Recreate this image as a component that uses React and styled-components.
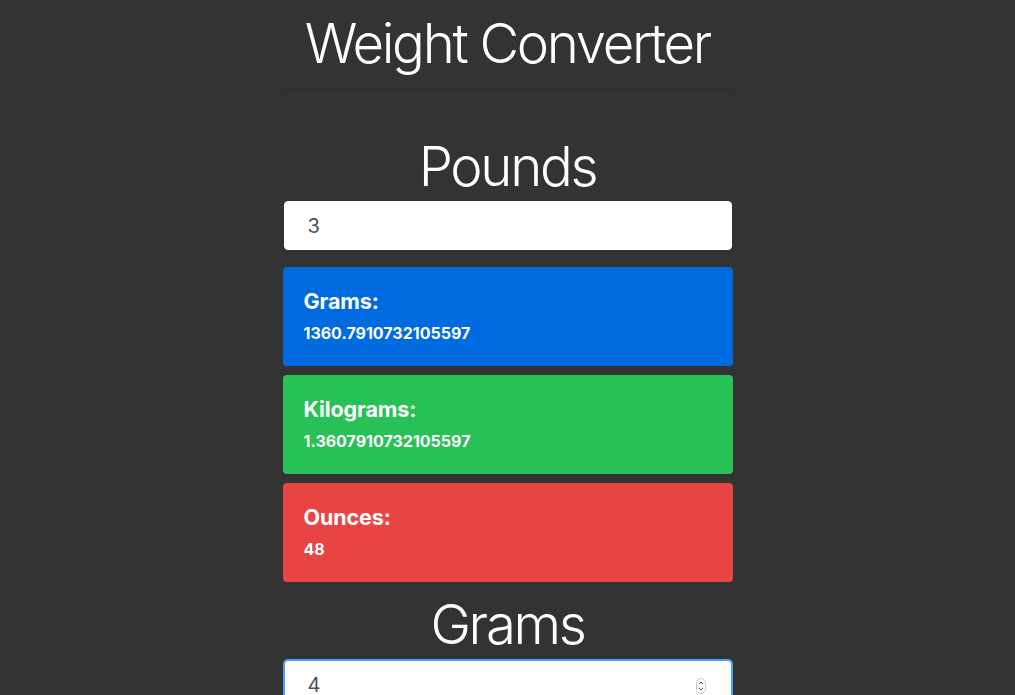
import React, { useState, useEffect, useRef } from 'react';
import styled, { createGlobalStyle } from "styled-components";

const GlobalStyle = createGlobalStyle`
    body {
        margin: 0;
        background: #333333;
        font-family: "Inter", "Liberation Sans", sans-serif;
        color: #ffffff;
    }
`;

const Page = styled.div`
    width: 450px;
    margin: 0 auto;
    padding-top: 10px;
`;

const Title = styled.h1`
    font-size: 54.5px;
    font-weight: 300;
    line-height: 67px;
    text-align: center;
    margin: 0;
    letter-spacing: -2.3px;
`;

const Rule = styled.hr`
    border: 0;
    border-top: 1px solid rgba(0, 0, 0, 0.12);
    margin: 12px 0 0;
`;

const Section = styled.h2`
    font-size: 54.5px;
    font-weight: 300;
    line-height: 67px;
    text-align: center;
    margin: ${props => props.$top}px 0 ${props => props.$bottom}px;
    letter-spacing: -2.3px;
`;

const FieldWrap = styled.div`
    position: relative;
`;

const Field = styled.input`
    box-sizing: border-box;
    display: block;
    width: calc(100% - 2px);
    height: 49px;
    margin: 0 auto;
    padding: 0 23px;
    font-family: "Inter", "Liberation Sans", sans-serif;
    font-size: 20px;
    color: #495057;
    background: #fff;
    border: 1px solid #fff;
    border-radius: 4px;
    outline: none;
    -moz-appearance: textfield;

    &:focus {
        border-color: #4aa3f5;
        box-shadow: 0 0 0 1px #4aa3f5;
    }

    &::-webkit-inner-spin-button,
    &::-webkit-outer-spin-button {
        -webkit-appearance: none;
        margin: 0;
    }
`;

const Spinner = styled.svg`
    position: absolute;
    right: 27px;
    top: 18px;
    pointer-events: none;
`;

const Card = styled.div`
    box-sizing: border-box;
    height: 99px;
    margin-top: ${props => props.$first ? 17 : 9}px;
    padding: 22px 21px;
    background: ${props => props.$color};
    border-radius: 4px;
`;

const CardTitle = styled.h5`
    margin: 0 0 10px;
    font-size: 21.5px;
    font-weight: 700;
    line-height: 24px;
    letter-spacing: -0.1px;
`;

const CardValue = styled.div`
    font-size: 16px;
    font-weight: 700;
    line-height: 20px;
`;

const Result = ({ label, value, color, first }) => (
    <Card $color={color} $first={first}>
        <CardTitle>{label}:</CardTitle>
        <CardValue>{value}</CardValue>
    </Card>
);

const App = () => {
    const [pounds, setPounds] = useState('3');
    const [grams, setGrams] = useState('4');
    const gramsRef = useRef(null);
    const lb = parseFloat(pounds) || 0;

    useEffect(() => {
        if (gramsRef.current) gramsRef.current.focus({ preventScroll: true });
    }, []);

    return (
        <Page>
            <GlobalStyle />
            <Title>Weight Converter</Title>
            <Rule />
            <Section $top={43} $bottom={1}>Pounds</Section>
            <Field value={pounds} onChange={e => setPounds(e.target.value)} />
            <Result first label="Grams" value={lb ? '1360.7910732105597' : 0} color="#006be0" />
            <Result label="Kilograms" value={lb ? '1.3607910732105597' : 0} color="#28c156" />
            <Result label="Ounces" value={lb * 16} color="#e84444" />
            <Section $top={9} $bottom={2}>Grams</Section>
            <FieldWrap>
                <Field ref={gramsRef} type="number" value={grams} onChange={e => setGrams(e.target.value)} />
                <Spinner width="10" height="16" viewBox="0 0 10 16">
                    <rect x="0.5" y="0.5" width="9" height="15" rx="4.5" fill="#fff" stroke="#c8c8c8" />
                    <path d="M3 6 L5 4 L7 6 M3 10 L5 12 L7 10" fill="none" stroke="#555" strokeWidth="1" />
                </Spinner>
            </FieldWrap>
        </Page>
    );
};

export default App;
